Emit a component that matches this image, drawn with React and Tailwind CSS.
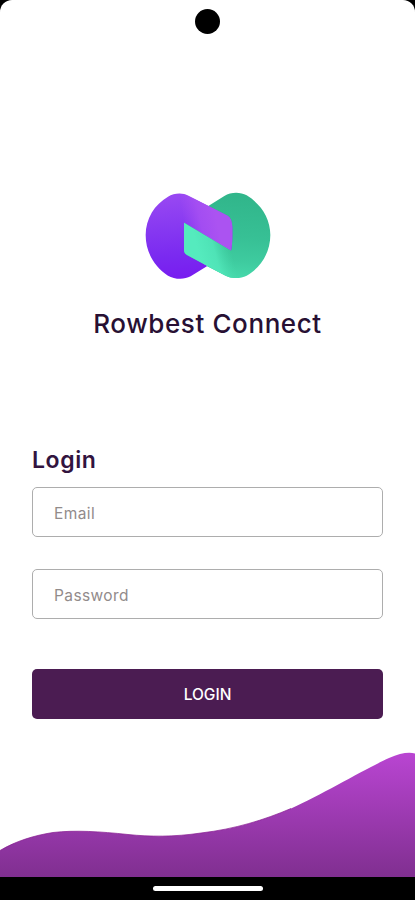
import React from 'react';

function Logo() {
  return (
    <svg viewBox="0 0 435 330" className="h-[110px] w-[145px]" aria-hidden="true">
      <defs>
        <linearGradient id="violet" gradientUnits="userSpaceOnUse" x1="120" y1="50" x2="140" y2="290">
          <stop offset="0" stopColor="#9747f2" />
          <stop offset="0.4" stopColor="#8638f1" />
          <stop offset="0.75" stopColor="#7a29f0" />
          <stop offset="1" stopColor="#781df0" />
        </linearGradient>
        <linearGradient id="band" gradientUnits="userSpaceOnUse" x1="147" y1="128" x2="243" y2="109">
          <stop offset="0" stopColor="#a64ff2" stopOpacity="0" />
          <stop offset="0.5" stopColor="#a750f2" stopOpacity="0.85" />
          <stop offset="1" stopColor="#ab53f1" />
        </linearGradient>
        <linearGradient id="green" gradientUnits="userSpaceOnUse" x1="310" y1="50" x2="290" y2="290">
          <stop offset="0" stopColor="#31b68b" />
          <stop offset="0.5" stopColor="#37c095" />
          <stop offset="0.8" stopColor="#3ecb9f" />
          <stop offset="1" stopColor="#45d8aa" />
        </linearGradient>
        <linearGradient id="mint" gradientUnits="userSpaceOnUse" x1="190" y1="215" x2="282" y2="190">
          <stop offset="0" stopColor="#55ebbe" />
          <stop offset="0.5" stopColor="#52e8bb" stopOpacity="0.85" />
          <stop offset="1" stopColor="#48dcae" stopOpacity="0" />
        </linearGradient>
      </defs>
      {/* right lobe */}
      <path
        d="M220 78L268 48C288 35 316 35 335 46C378 72 406 115 406 165C406 218 377 263 335 287C315 297 291 296 272 287L215 258L147 128Z"
        fill="url(#green)"
      />
      {/* left lobe */}
      <path
        d="M147 128V212L217 258L167 289C147 300 118 298 99 287C57 260 32 215 32 165C32 115 59 73 99 50C117 39 142 37 160 47L278 107Q290 114 292 140V165Q292 195 288 212Z"
        fill="url(#violet)"
      />
      <path
        d="M147 128L130 41Q147 40 160 47L278 107Q290 114 292 140V165Q292 195 288 212Z"
        fill="url(#band)"
      />
      {/* solid fill under the mint fade so the violet lobe stays hidden */}
      <path d="M147 128L288 212L310 293Q290 297 272 287L156 225Q147 220 147 210Z" fill="url(#green)" />
      <path d="M147 128L288 212L310 293Q290 297 272 287L156 225Q147 220 147 210Z" fill="url(#mint)" />
    </svg>
  );
}

function Field({ label, type }) {
  return (
    <input
      type={type}
      placeholder={label}
      aria-label={label}
      className="block h-[50px] w-full rounded-[5px] border border-[#adadad] px-[21px] pt-[3px] text-[15.5px] tracking-[0.4px] text-[#281033] placeholder:text-[#928b8b]"
    />
  );
}

function Wave() {
  return (
    <svg viewBox="0 0 415 125" className="block h-[125px] w-full" aria-hidden="true">
      <defs>
        <linearGradient id="wave" x1="0" y1="0" x2="0" y2="1">
          <stop offset="0" stopColor="#b945d2" />
          <stop offset="1" stopColor="#802f90" />
        </linearGradient>
      </defs>
      <path
        d="M0 98.5C16 89 34 83.5 53 80.5C75 78 100 79.5 128 82.5C150 84.8 174 85 201 81C235 77 264 68 291 56.5C323 42 365 17 389 6Q405 -1 415 1.5V125H0Z"
        fill="url(#wave)"
      />
      <path
        d="M0 98.5C16 89 34 83.5 53 80.5C75 78 100 79.5 128 82.5C150 84.8 174 85 201 81C235 77 264 68 291 56.5"
        fill="none"
        stroke="#85188f"
        strokeWidth="0.7"
      />
    </svg>
  );
}

export default function App() {
  return (
    <div className="h-[900px] w-[415px] overflow-hidden bg-black font-['Inter',sans-serif]">
      <div className="flex h-full flex-col rounded-t-[12px] bg-white">
        <div className="flex h-[180px] justify-center pt-[9px]">
          <div className="size-[25px] rounded-full bg-black" />
        </div>

        <div className="flex h-[265px] flex-col items-center">
          <Logo />
          <h1 className="mt-[16px] text-[26px] leading-9 font-medium tracking-[0.6px] whitespace-nowrap text-[#281033]">
            Rowbest Connect
          </h1>
        </div>

        <form className="flex h-[307px] shrink-0 flex-col px-8" onSubmit={(e) => e.preventDefault()}>
          <h2 className="h-[42px] text-[23px] leading-[30px] font-semibold tracking-[0.6px] text-[#32143f]">
            Login
          </h2>
          <div className="flex flex-col gap-8">
            <Field label="Email" type="email" />
            <Field label="Password" type="password" />
          </div>
          <button
            type="submit"
            className="mt-[50px] h-[50px] rounded-[5px] bg-[#4b1c52] pt-px text-[15.5px] font-medium text-white"
          >
            LOGIN
          </button>
        </form>

        <Wave />
        <div className="flex h-[23px] items-center justify-center bg-black">
          <div className="h-[5px] w-[110px] rounded-full bg-white" />
        </div>
      </div>
    </div>
  );
}
